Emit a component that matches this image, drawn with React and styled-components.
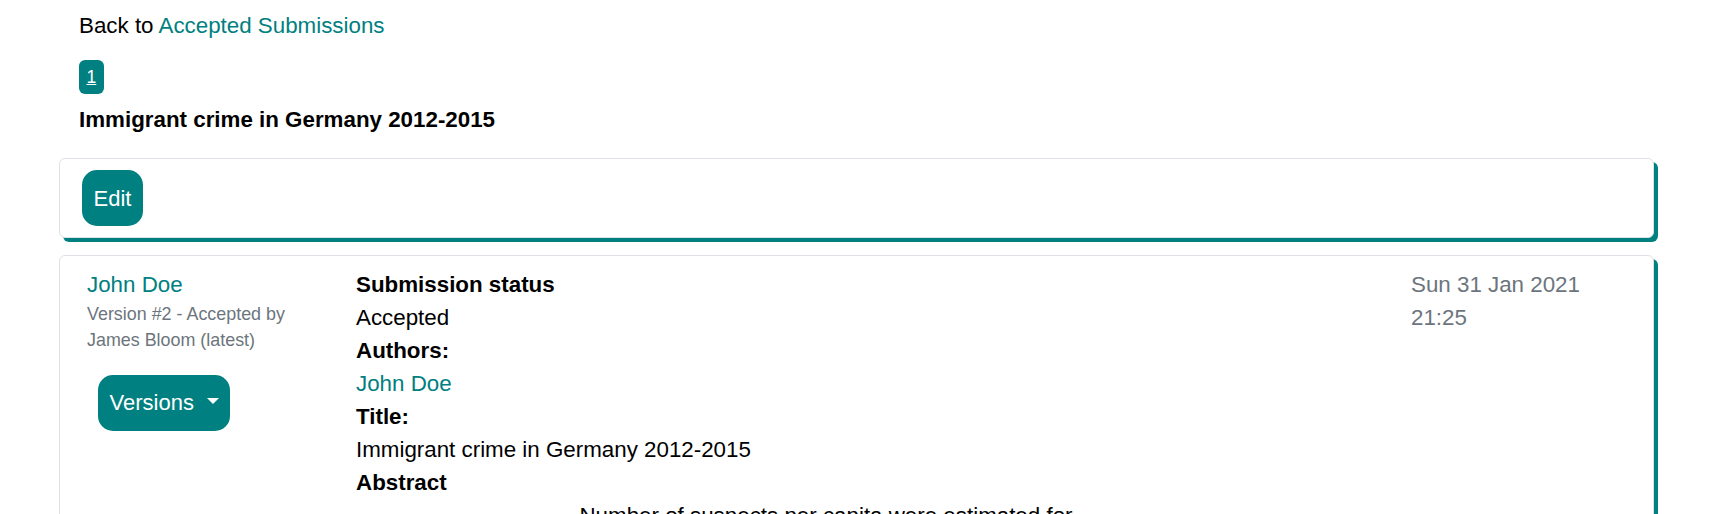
import React from 'react';
import styled, { createGlobalStyle } from 'styled-components';

const teal = '#008080';
const muted = '#6c757d';

const GlobalStyle = createGlobalStyle`
  html, body {
    margin: 0;
    padding: 0;
    background: #fff;
    overflow: hidden;
  }
  body {
    font-family: "Liberation Sans", Arial, sans-serif;
    font-size: 22.35px;
    line-height: 33px;
    color: #000;
  }
`;

const Page = styled.div`
  padding: 8px 63px 0 59px;
`;

const Header = styled.div`
  padding-left: 20px;
`;

const BackLine = styled.p`
  margin: 0 0 19px;
  padding-top: 2px;
  line-height: 31px;
`;

const Link = styled.a`
  color: ${teal};
  text-decoration: none;
  display: ${props => (props.$block ? 'block' : 'inline')};
`;

const Badge = styled.a`
  display: block;
  width: max-content;
  background: ${teal};
  color: #fff;
  font-size: 17.6px;
  line-height: 26px;
  padding: 4px 7.5px;
  border-radius: 6px;
  text-decoration: underline;
`;

const Title = styled.h5`
  font-size: 22.35px;
  line-height: 33px;
  font-weight: 700;
  margin: 9px 0 22px;
`;

const Card = styled.div`
  background: #fff;
  border: 1px solid #dee2e6;
  border-radius: 6px;
  box-shadow: 4px 4px 0 ${teal};
  padding: ${props => (props.$wide ? '12px 22px 11px 27px' : '11px 22px')};
  margin-bottom: 17px;
  display: ${props => (props.$wide ? 'flex' : 'block')};
  align-items: flex-start;
`;

const Button = styled.button`
  display: inline-flex;
  align-items: center;
  background: ${teal};
  color: #fff;
  border: none;
  border-radius: 15px;
  font-family: inherit;
  font-size: 22px;
  line-height: 33px;
  padding: 11.5px;
  cursor: pointer;
`;

const Caret = styled.span`
  display: inline-block;
  width: 0;
  height: 0;
  margin-left: 13px;
  margin-bottom: 3px;
  border-top: 6px solid #fff;
  border-left: 6px solid transparent;
  border-right: 6px solid transparent;
`;

const AuthorColumn = styled.div`
  flex: 0 0 230px;
  margin-right: 39px;
`;

const Meta = styled.div`
  color: ${muted};
  font-size: 17.9px;
  line-height: 26.4px;
`;

const Dropdown = styled.div`
  margin: 21px 0 0 11px;
`;

const DetailColumn = styled.div`
  flex: 0 0 940px;
`;

const Label = styled.div`
  font-weight: 700;
`;

const Abstract = styled.p`
  margin: 0 auto;
  max-width: 505px;
  text-align: center;
`;

const DateColumn = styled.div`
  flex: 0 0 220px;
  margin-left: auto;
  color: ${muted};
`;

export default function App() {
  return (
    <>
      <GlobalStyle />
      <Page>
        <Header>
          <BackLine>
            Back to <Link href="#">Accepted Submissions</Link>
          </BackLine>
          <Badge href="#">1</Badge>
          <Title>Immigrant crime in Germany 2012-2015</Title>
        </Header>

        <Card>
          <Button>Edit</Button>
        </Card>

        <Card $wide>
          <AuthorColumn>
            <Link href="#" $block>John Doe</Link>
            <Meta>Version #2 - Accepted by James Bloom (latest)</Meta>
            <Dropdown>
              <Button>
                Versions
                <Caret />
              </Button>
            </Dropdown>
          </AuthorColumn>

          <DetailColumn>
            <Label>Submission status</Label>
            <div>Accepted</div>
            <Label>Authors:</Label>
            <Link href="#" $block>John Doe</Link>
            <Label>Title:</Label>
            <div>Immigrant crime in Germany 2012-2015</div>
            <Label>Abstract</Label>
            <Abstract>
              Number of suspects per capita were estimated for immigrants from
              various countries of origin, based on the official crime statistics
              of the German Federal Criminal Police Office.
            </Abstract>
          </DetailColumn>

          <DateColumn>Sun 31 Jan 2021 21:25</DateColumn>
        </Card>
      </Page>
    </>
  );
}
